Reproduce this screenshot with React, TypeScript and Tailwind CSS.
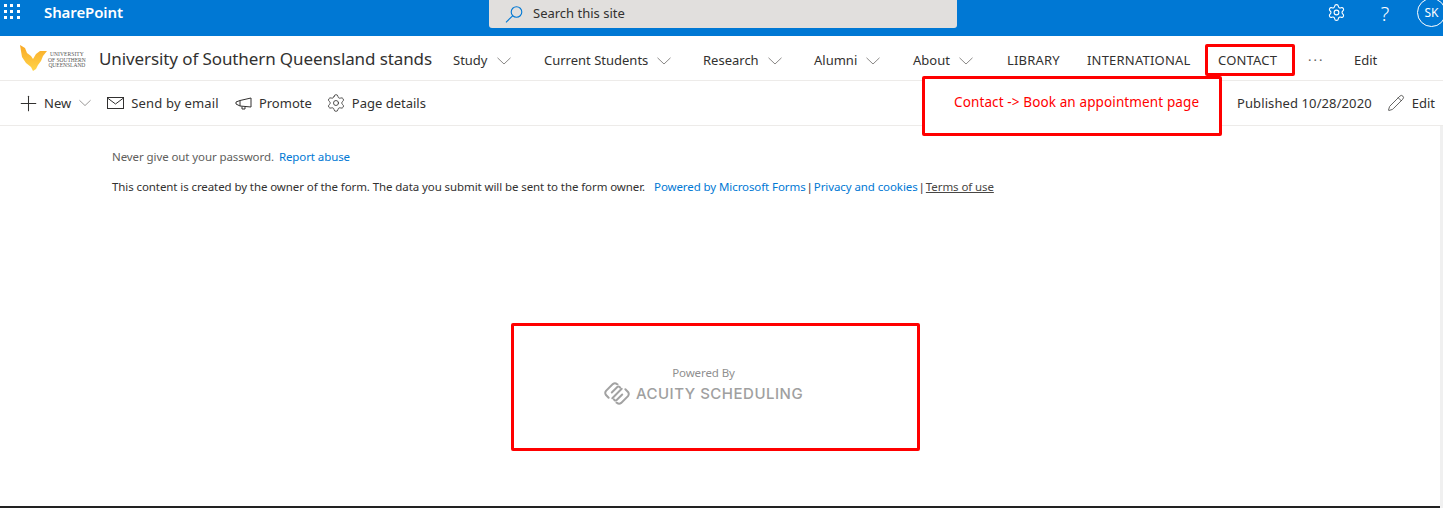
import { Pencil, Plus, Settings } from 'lucide-react'

const NAV_ITEMS = [
  { label: 'Study', width: 91, chevron: true },
  { label: 'Current Students', width: 159, chevron: true },
  { label: 'Research', width: 111, chevron: true },
  { label: 'Alumni', width: 99, chevron: true },
  { label: 'About', width: 94, chevron: true },
  { label: 'LIBRARY', width: 80, chevron: false },
  { label: 'INTERNATIONAL', width: 131, chevron: false },
  { label: 'CONTACT', width: 91, chevron: false },
]

function Chevron({ width }: { width: number }) {
  return (
    <svg width={width} height="8" viewBox="0 0 14 8" fill="none" stroke="#8a8886" strokeWidth="1" className="shrink-0">
      <path d="M0.5 0.8 L7 7 L13.5 0.8" />
    </svg>
  )
}

function Waffle() {
  return (
    <div className="grid grid-cols-3 gap-[3px] w-4 ml-1 mt-1">
      {Array.from({ length: 9 }).map((_, i) => (
        <span key={i} className="w-[3px] h-[3px] bg-white" />
      ))}
    </div>
  )
}

function SearchIcon() {
  return (
    <svg width="18" height="17" viewBox="0 0 18 17" fill="none" stroke="#0078d4" strokeWidth="1.1">
      <circle cx="11.5" cy="6" r="5.3" />
      <path d="M7.6 9.8 L1 16.3" />
    </svg>
  )
}

function MailIcon() {
  return (
    <svg width="17" height="12" viewBox="0 0 17 12" fill="none" stroke="#323130" strokeWidth="1">
      <rect x="0.5" y="0.5" width="16" height="11" />
      <path d="M0.5 1 L8.5 7 L16.5 1" />
    </svg>
  )
}

function PromoteIcon() {
  return (
    <svg width="17" height="13" viewBox="0 0 17 13" fill="none" stroke="#323130" strokeWidth="1">
      <path d="M16 1 L16 10 L5 9 L1 7 L1 5 L5 3.5 Z" />
      <path d="M5 3.5 L5 9 M7 9.5 L7 12 L10 12 L10 10" />
    </svg>
  )
}

function UniLogo() {
  return (
    <div className="flex items-center w-[68px] shrink-0">
      <svg width="27" height="26" viewBox="0 0 27 26" className="shrink-0">
        <defs>
          <linearGradient id="gold" x1="0" y1="0" x2="0" y2="1">
            <stop offset="0" stopColor="#f9a825" />
            <stop offset="1" stopColor="#ffd54a" />
          </linearGradient>
        </defs>
        <path
          fill="url(#gold)"
          d="M0 0 L5 3 L7 8 L11 11 L13 14 L16 9 L20 6 L27 6 L23 11 L21 16 L18 20 L16 24 L13 26 L11 22 L6 18 L2 12 L1 6 Z"
        />
      </svg>
      <div className="ml-[1px] mt-[5px] font-['Liberation_Serif',serif] text-[5.5px] leading-[5.5px] text-[#555] text-center whitespace-nowrap">
        <div className="tracking-[0.1px]">UNIVERSITY</div>
        <div>OF SOUTHERN</div>
        <div>QUEENSLAND</div>
      </div>
    </div>
  )
}

function AcuityLogo() {
  const half = (
    <>
      <path d="M13.5 3.2 L13 3 Q11 1.5 9 3 L2.5 9.5 Q1 11.5 2.5 13.5 L5 16" />
      <path d="M16 6.5 L15.5 5.8 Q14.5 4.8 13.5 5.5 L8 11" />
    </>
  )
  return (
    <svg width="26" height="23" viewBox="1 1 24 22" fill="none" stroke="#a2a2a2" strokeWidth="1.9" strokeLinecap="round">
      {half}
      <g transform="rotate(180 13 12)">{half}</g>
      <path d="M8.5 16.5 L17.5 7.5" />
    </svg>
  )
}

export default function App() {
  return (
    <div className="w-[1443px] h-[508px] relative overflow-hidden flex flex-col bg-white text-[#323130] font-['Noto_Sans',sans-serif]">
      <header className="h-9 shrink-0 bg-[#0078d4] flex items-start text-white">
        <div className="w-11 shrink-0"><Waffle /></div>
        <div className="w-[445px] shrink-0 mt-[2px] text-[15px] font-semibold leading-5 tracking-[-0.1px]">SharePoint</div>
        <div className="w-[468px] h-7 shrink-0 bg-[#e1dfdd] rounded-b-[3px] flex items-center pl-4 text-[#323130] text-[13px]">
          <SearchIcon />
          <span className="ml-[10px]">Search this site</span>
        </div>
        <div className="flex-1 flex items-start justify-end">
          <Settings strokeWidth={1.4} className="w-[19px] h-[19px] mt-[3px]" />
          <span className="ml-[31px] mt-[1px] w-[16px] h-[26px] text-[20px] leading-[26px] font-light text-center">?</span>
          <span className="ml-[24px] -mr-[3px] -mt-[2px] w-[29px] h-[29px] shrink-0 rounded-full border border-white text-[12px] flex items-center justify-center">SK</span>
        </div>
      </header>

      <nav className="h-[45px] shrink-0 border-b border-[#edebe9] flex items-center pl-5 text-[13px] text-[#323130]">
        <UniLogo />
        <div className="ml-[11px] w-[354px] shrink-0 text-[17px] leading-6 tracking-[-0.1px] whitespace-nowrap mt-[1px]">University of Southern Queensland stands</div>
        {NAV_ITEMS.map(item => (
          <div
            key={item.label}
            className={`shrink-0 flex items-center whitespace-nowrap mt-[5px] ${item.chevron ? '' : 'tracking-[0.2px]'}`}
            style={{ width: item.width }}
          >
            <span>{item.label}</span>
            {item.chevron && <span className="ml-[9px] flex"><Chevron width={14} /></span>}
          </div>
        ))}
        <span className="-ml-[1px] w-[46px] mt-[5px] text-[#605e5c] shrink-0 tracking-[2px]">···</span>
        <span className="mt-[5px]">Edit</span>
      </nav>

      <div className="h-[45px] shrink-0 border-b border-[#edebe9] flex items-center pl-4 text-[13px]">
        <Plus strokeWidth={1} className="w-[25px] h-[25px]" />
        <span className="ml-[3px] mt-[1px]">New</span>
        <span className="ml-2 flex"><Chevron width={12} /></span>
        <span className="ml-[16px] flex"><MailIcon /></span>
        <span className="ml-[7px] mt-[1px] tracking-[0.2px]">Send by email</span>
        <span className="ml-4 flex"><PromoteIcon /></span>
        <span className="ml-[7px] mt-[1px]">Promote</span>
        <Settings strokeWidth={1} className="w-5 h-5 ml-[14px]" />
        <span className="ml-[6px] mt-[1px]">Page details</span>
        <span className="ml-auto mt-[1px] tracking-[0.1px]">Published 10/28/2020</span>
        <Pencil strokeWidth={1} className="w-[18px] h-[18px] ml-[15px]" />
        <span className="ml-[7px] mr-2 mt-[1px]">Edit</span>
      </div>

      <div className="flex-1 flex min-h-0">
        <main className="flex-1 flex flex-col">
          <div className="flex-1 pl-28 pt-[23px] text-[11.5px] leading-4 tracking-[-0.09px]">
            <p className="text-[#605e5c]">
              Never give out your password.<a className="ml-[5px] text-[#0078d4]">Report abuse</a>
            </p>
            <p className="mt-[14px] whitespace-nowrap">
              This content is created by the owner of the form. The data you submit will be sent to the form owner.
              <a className="ml-[9px] text-[#0078d4]">Powered by Microsoft Forms</a>
              <span className="mx-[1px]">|</span>
              <a className="text-[#0078d4]">Privacy and cookies</a>
              <span className="mx-[1px]">|</span>
              <a className="underline text-[#484644]">Terms of use</a>
            </p>
            <div className="mt-[170px] ml-[491px] w-[201px] flex flex-col items-center">
              <div className="leading-4 text-[#8f8f8f]">Powered By</div>
              <div className="flex items-center mt-[1px]">
                <AcuityLogo />
                <span className="ml-[6px] font-['Inter',sans-serif] text-[15px] font-medium tracking-[0.5px] text-[#a0a0a0] whitespace-nowrap">ACUITY SCHEDULING</span>
              </div>
            </div>
          </div>
          <div className="h-[2px] shrink-0 bg-[#222]" />
        </main>
        <div className="w-[3px] shrink-0 bg-[#f0f0f0]" />
      </div>

      <div className="absolute left-[1205px] top-[44px] w-[90px] h-[32px] border-[3px] border-[#ff0000] rounded-[2px]" />
      <div className="absolute left-[922px] top-[76px] w-[300px] h-[60px] border-[3px] border-[#ff0000] rounded-[2px] pl-[29px] pt-[13px] text-[13.5px] leading-5 tracking-[0.12px] text-[#ff0000] whitespace-nowrap bg-white">
        Contact -&gt; Book an appointment page
      </div>
      <div className="absolute left-[511px] top-[323px] w-[409px] h-[128px] border-[3px] border-[#ff0000] rounded-[2px]" />
    </div>
  )
}
